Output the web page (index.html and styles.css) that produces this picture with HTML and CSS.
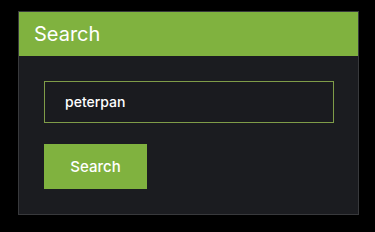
FILE: index.html
```html
<!DOCTYPE html>
<html lang="en">
<head>
    <meta charset="UTF-8">
    <meta name="viewport" content="width=device-width, initial-scale=1.0">
    <title>Search</title>
    <link rel="stylesheet" href="styles.css">
</head>
<body>

<div class="panel">
    <div class="panel-header">Search</div>
    <div class="panel-body">
        <input type="text" class="search-input" value="peterpan">
        <button class="search-button">Search</button>
    </div>
</div>

</body>
</html>
```

FILE: styles.css
```css
body {
    font-family: Inter, Arial, sans-serif;
    background-color: #000;
    margin: 0;
    padding: 11px 0 0 18px;
}
.panel {
    width: 339px;
    height: 202px;
    background-color: #1b1c20;
    border: 1px solid #38393c;
    display: flex;
    flex-direction: column;
}
.panel-header {
    background-color: #80b23f;
    color: #fff;
    height: 44px;
    line-height: 44px;
    padding-left: 15px;
    font-size: 20px;
}
.panel-body {
    padding: 25px 24px 0 25px;
    display: flex;
    flex-direction: column;
    align-items: flex-start;
    gap: 21px;
}
.search-input {
    box-sizing: border-box;
    width: 290px;
    height: 42px;
    background-color: #1a1b1f;
    border: 1px solid #7f9c48;
    color: #fff;
    font-family: Inter, Arial, sans-serif;
    font-size: 14px;
    font-weight: 500;
    padding: 0 0 2px 20px;
    outline: none;
}
.search-button {
    background-color: #80b23f;
    color: #fff;
    border: none;
    width: 103px;
    height: 45px;
    font-family: Inter, Arial, sans-serif;
    font-size: 15px;
    font-weight: 500;
    cursor: pointer;
}
```
